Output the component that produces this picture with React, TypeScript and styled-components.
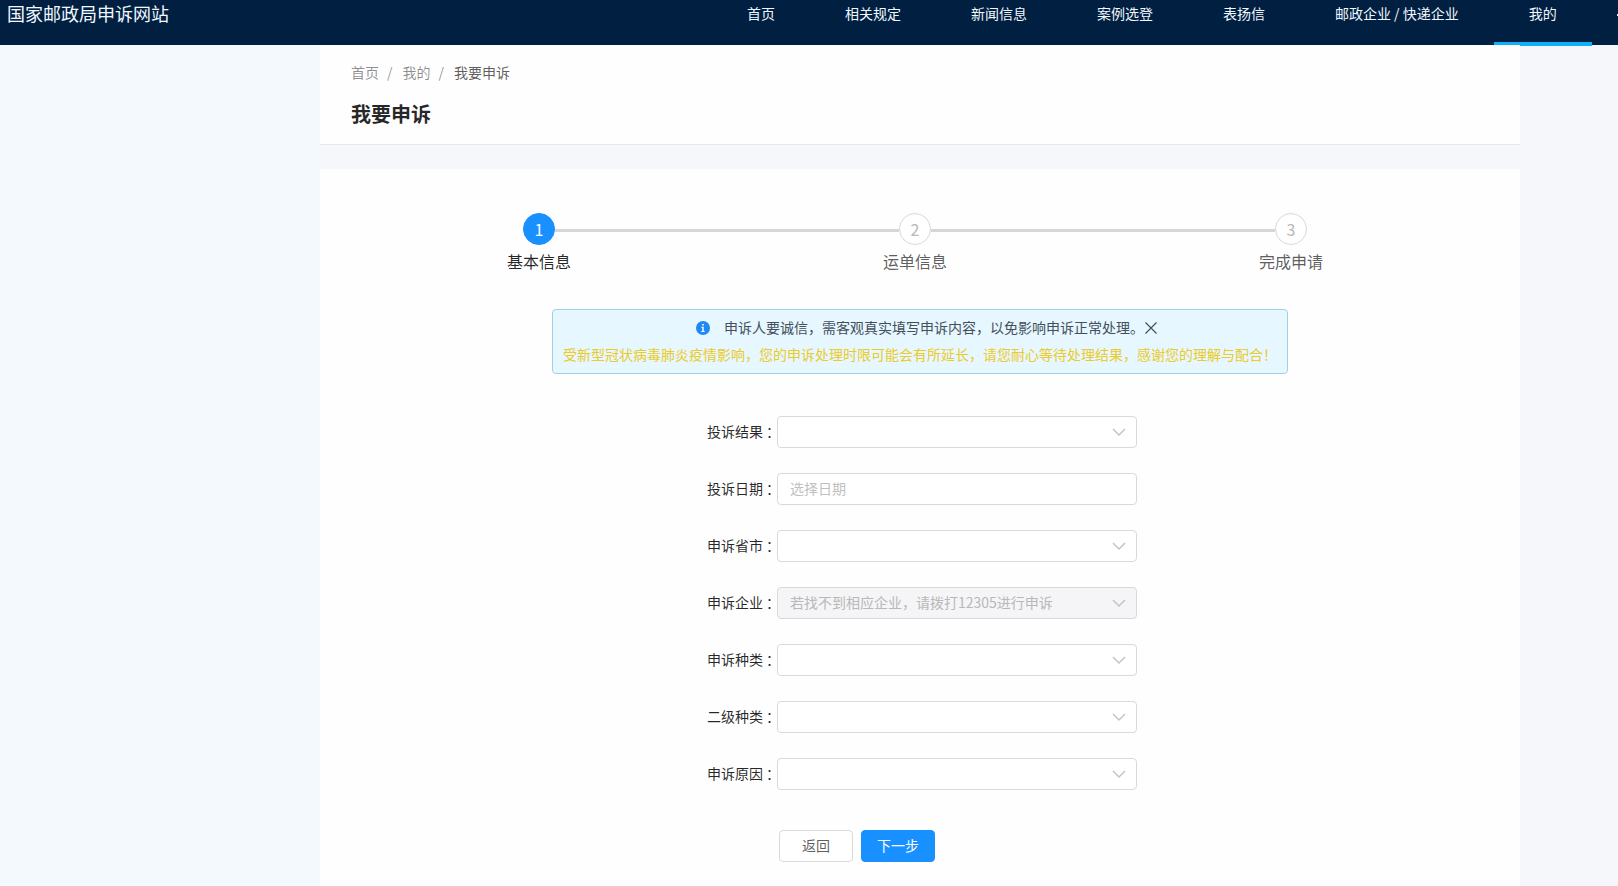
import React from 'react';
import styled, { createGlobalStyle } from 'styled-components';

const GlobalStyle = createGlobalStyle`
  *, *::before, *::after { box-sizing: border-box; }
  html, body, #root { min-height: 100vh; }
  body {
    margin: 0;
    overflow-x: hidden;
    font-family: "Noto Sans CJK SC", "Noto Sans", sans-serif;
    font-size: 14px;
    line-height: 22px;
    color: rgba(0, 0, 0, 0.65);
    background: #f6f7fb;
  }
  button, input, select { font: inherit; }
  a { color: inherit; text-decoration: none; }
`;

const Page = styled.div`
  display: flex;
  flex-direction: column;
  min-height: 100vh;
`;

const Header = styled.header`
  display: flex;
  height: 45px;
  background: #001f41;
  color: #f0f8ff;
`;

const Brand = styled.a`
  flex: 0 0 44%;
  padding: 0 7px;
  font-size: 18px;
  line-height: 26px;
  white-space: nowrap;
`;

const Nav = styled.nav`
  display: flex;
  flex: 1 1 0;
  min-width: 0;
  height: 46px;
  overflow: hidden;
`;

const NavLink = styled.a<{ $active?: boolean }>`
  flex: none;
  padding: 0 35px;
  line-height: 26px;
  white-space: nowrap;
  border-bottom: 4px solid ${(p) => (p.$active ? '#0fb0f5' : 'transparent')};
`;

const AccountLink = styled.a`
  flex: none;
  padding: 6px 25px;
`;

const Body = styled.div`
  display: grid;
  grid-template-columns: 320fr 1200fr 98fr;
  flex: 1;
`;

const SideArea = styled.div`
  background: #f4f9fd;
`;

const Content = styled.main`
  display: flex;
  flex-direction: column;
  gap: 24px;
  min-width: 0;
`;

const PageHeader = styled.section`
  padding: 16px 31px 14px;
  background: #fefefe;
  border-bottom: 1px solid #e8e8ec;
`;

const Breadcrumb = styled.nav`
  display: flex;
  color: rgba(0, 0, 0, 0.45);
`;

const Crumb = styled.a`
  &:not(:last-child)::after {
    content: "/";
    margin: 0 10px 0 8px;
  }
  &:last-child { color: rgba(0, 0, 0, 0.65); }
`;

const Title = styled.h1`
  margin: 15px 0 0;
  font-size: 20px;
  line-height: 32px;
  font-weight: 700;
  color: rgba(0, 0, 0, 0.85);
`;

const Card = styled.section`
  display: flex;
  flex-direction: column;
  align-items: center;
  flex: 1;
  padding: 44px 32px 24px;
  background: #fefefe;
`;

const Steps = styled.ol`
  display: flex;
  width: 100%;
  max-width: 816px;
  margin: 0 10px 0 0;
  padding: 0;
  list-style: none;
`;

const Step = styled.li<{ $active?: boolean }>`
  display: flex;
  flex-direction: column;
  align-items: center;
  flex: none;
  width: 64px;
  font-size: 16px;
  line-height: 24px;
  color: ${(p) => (p.$active ? 'rgba(0, 0, 0, 0.85)' : 'rgba(0, 0, 0, 0.65)')};
`;

const StepNumber = styled.span<{ $active?: boolean }>`
  width: 32px;
  height: 32px;
  margin-bottom: 4px;
  border: 1px solid ${(p) => (p.$active ? '#1890ff' : '#d9d9d9')};
  border-radius: 50%;
  background: ${(p) => (p.$active ? '#1890ff' : '#ffffff')};
  color: ${(p) => (p.$active ? '#ffffff' : '#b8b8b8')};
  line-height: 30px;
  text-align: center;
`;

const StepLine = styled.li`
  flex: 1;
  height: 3px;
  margin: 16px -16px 0;
  background: #d6d6d6;
`;

const Notice = styled.div`
  margin-top: 36px;
  padding: 4px 10px 5px;
  border: 1px solid #9cd3e6;
  border-radius: 4px;
  background: #e6f7ff;
  line-height: 27px;
`;

const NoticeRow = styled.div`
  display: flex;
  align-items: center;
  justify-content: center;
  padding-left: 14px;
`;

const NoticeText = styled.span`
  margin-left: 14px;
  color: #454f5c;
`;

const CloseButton = styled.button`
  display: flex;
  padding: 0;
  border: 0;
  background: none;
  color: #454f5c;
  cursor: pointer;
`;

const Warning = styled.div`
  color: #ebcb28;
  text-align: center;
`;

const Form = styled.form`
  display: flex;
  flex-direction: column;
  gap: 25px;
  margin: 42px 0 0 4px;
`;

const Field = styled.div`
  display: flex;
  align-items: center;
`;

const Label = styled.label`
  width: 70px;
  padding-bottom: 2px;
  color: rgba(0, 0, 0, 0.85);
  white-space: nowrap;
`;

const Colon = styled.span`
  padding-left: 3px;
`;

const Control = styled.div`
  position: relative;
  width: 360px;
`;

const controlStyle = `
  display: block;
  width: 100%;
  height: 32px;
  padding: 0 12px 2px;
  border: 1px solid #d9d9d9;
  border-radius: 4px;
  outline: none;
`;

const TextInput = styled.input`
  ${controlStyle}
  background: #ffffff;
  &::placeholder { color: #bfbfbf; opacity: 1; }
`;

const Select = styled.select`
  ${controlStyle}
  appearance: none;
  background: #ffffff;
  color: rgba(0, 0, 0, 0.65);
  &:disabled {
    background: #f5f4f6;
    color: #b8b8b8;
    opacity: 1;
  }
`;

const Chevron = styled.svg`
  position: absolute;
  top: 10px;
  right: 11px;
  pointer-events: none;
`;

const Actions = styled.div`
  display: flex;
  gap: 8px;
  margin: 15px 0 0 72px;
`;

const Button = styled.button<{ $primary?: boolean }>`
  width: 74px;
  height: 32px;
  padding: 0 0 2px;
  border: 1px solid ${(p) => (p.$primary ? '#1890ff' : '#d9d9d9')};
  border-radius: 4px;
  background: ${(p) => (p.$primary ? '#1890ff' : '#ffffff')};
  color: ${(p) => (p.$primary ? '#ffffff' : 'rgba(0, 0, 0, 0.65)')};
  cursor: pointer;
`;

const navItems = ['首页', '相关规定', '新闻信息', '案例选登', '表扬信', '邮政企业 / 快递企业', '我的'];

const steps = ['基本信息', '运单信息', '完成申请'];

type FieldItem = { id: string; label: string; kind: 'select' | 'date'; hint?: string; disabled?: boolean };

const fields: FieldItem[] = [
  { id: 'result', label: '投诉结果', kind: 'select' },
  { id: 'date', label: '投诉日期', kind: 'date', hint: '选择日期' },
  { id: 'region', label: '申诉省市', kind: 'select' },
  { id: 'company', label: '申诉企业', kind: 'select', hint: '若找不到相应企业，请拨打12305进行申诉', disabled: true },
  { id: 'category', label: '申诉种类', kind: 'select' },
  { id: 'subcategory', label: '二级种类', kind: 'select' },
  { id: 'reason', label: '申诉原因', kind: 'select' },
];

function InfoIcon() {
  return (
    <svg width="14" height="14" viewBox="0 0 14 14" aria-hidden="true">
      <circle cx="7" cy="7" r="7" fill="#1e88f5" />
      <path d="M6.2 3h1.6v1.5H6.2zM5.4 5.7h2.3v4.2h1v1H5.3v-1h1V6.7h-.9z" fill="#fff" />
    </svg>
  );
}

function CloseIcon() {
  return (
    <svg width="14" height="14" viewBox="0 0 14 14" fill="none" stroke="currentColor" strokeWidth="1.2" aria-hidden="true">
      <path d="M1.5 1.5l11 11M12.5 1.5l-11 11" />
    </svg>
  );
}

function MenuIcon() {
  return (
    <svg width="14" height="14" viewBox="0 0 14 14" fill="none" stroke="currentColor" strokeWidth="2" aria-hidden="true">
      <path d="M0 6h14" />
    </svg>
  );
}

export default function App() {
  return (
    <Page>
      <GlobalStyle />
      <Header>
        <Brand href="#">国家邮政局申诉网站</Brand>
        <Nav aria-label="主导航">
          {navItems.map((item) => (
            <NavLink key={item} href="#" $active={item === '我的'}>{item}</NavLink>
          ))}
          <AccountLink href="#" aria-label="更多"><MenuIcon /></AccountLink>
        </Nav>
      </Header>
      <Body>
        <SideArea />
        <Content>
          <PageHeader>
            <Breadcrumb aria-label="面包屑">
              <Crumb href="#">首页</Crumb>
              <Crumb href="#">我的</Crumb>
              <Crumb href="#">我要申诉</Crumb>
            </Breadcrumb>
            <Title>我要申诉</Title>
          </PageHeader>
          <Card>
            <Steps>
              {steps.map((step, i) => (
                <React.Fragment key={step}>
                  {i > 0 && <StepLine aria-hidden="true" />}
                  <Step $active={i === 0}>
                    <StepNumber $active={i === 0}>{i + 1}</StepNumber>
                    {step}
                  </Step>
                </React.Fragment>
              ))}
            </Steps>
            <Notice>
              <NoticeRow>
                <InfoIcon />
                <NoticeText>申诉人要诚信，需客观真实填写申诉内容，以免影响申诉正常处理。</NoticeText>
                <CloseButton type="button" aria-label="关闭"><CloseIcon /></CloseButton>
              </NoticeRow>
              <Warning>受新型冠状病毒肺炎疫情影响，您的申诉处理时限可能会有所延长，请您耐心等待处理结果，感谢您的理解与配合！</Warning>
            </Notice>
            <Form onSubmit={(e) => e.preventDefault()}>
              {fields.map((f) => (
                <Field key={f.id}>
                  <Label htmlFor={f.id}>{f.label}<Colon>：</Colon></Label>
                  <Control>
                    {f.kind === 'date' ? (
                      <TextInput id={f.id} type="text" placeholder={f.hint} />
                    ) : (
                      <>
                        <Select id={f.id} disabled={f.disabled} defaultValue="">
                          <option value="">{f.hint ?? ''}</option>
                        </Select>
                        <Chevron width="14" height="12" viewBox="0 0 14 12" fill="none" stroke="#c4c4c4" strokeWidth="1.5" aria-hidden="true">
                          <path d="M1 3l6 6 6-6" />
                        </Chevron>
                      </>
                    )}
                  </Control>
                </Field>
              ))}
              <Actions>
                <Button type="button">返回</Button>
                <Button type="submit" $primary>下一步</Button>
              </Actions>
            </Form>
          </Card>
        </Content>
      </Body>
    </Page>
  );
}
